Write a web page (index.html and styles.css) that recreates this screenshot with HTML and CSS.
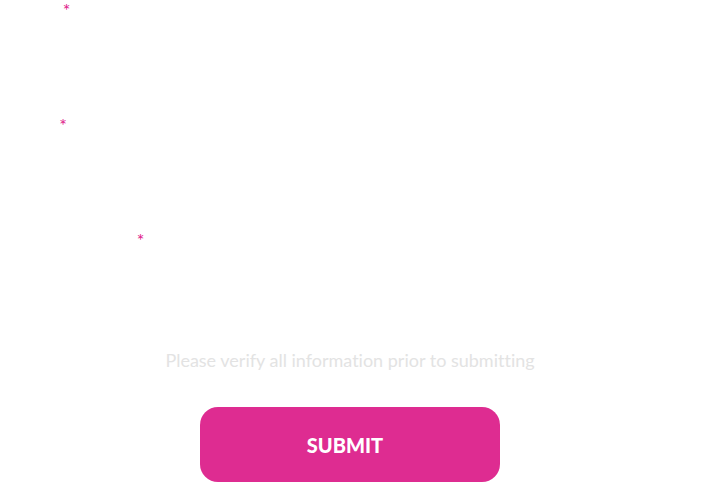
FILE: index.html
```html
<!DOCTYPE html>
<html lang="en">
<head>
<meta charset="utf-8">
<title>Form</title>
<link rel="stylesheet" href="styles.css">
</head>
<body>
<form class="form">
  <div class="group">
    <label class="label">Full Name<span class="req">*</span></label>
    <input class="field" type="text">
  </div>
  <div class="group">
    <label class="label">Company<span class="req">*</span></label>
    <input class="field" type="text">
  </div>
  <div class="group">
    <label class="label">Best Times to Contact<span class="req">*</span></label>
    <input class="field" type="text">
  </div>
  <p class="note">Please verify all information prior to submitting</p>
  <div class="actions">
    <button class="submit" type="button">SUBMIT</button>
  </div>
</form>
</body>
</html>
```
FILE: styles.css
```css
html, body {
  margin: 0;
  padding: 0;
  background: #ffffff;
  font-family: Lato, "Open Sans", sans-serif;
}
.form {
  width: 700px;
  display: flex;
  flex-direction: column;
  padding-top: 2px;
}
.group {
  display: flex;
  flex-direction: column;
  height: 115px;
}
.label {
  color: #ffffff;
  font-size: 14px;
  line-height: 20px;
}
.req {
  color: #e0218a;
  font-size: 18px;
  line-height: 14px;
  margin-left: 1px;
}
.field {
  margin-top: 6px;
  height: 40px;
  border: 1px solid #ffffff;
  background: #ffffff;
  outline: none;
}
.note {
  margin: 0;
  text-align: center;
  color: #e3e3e3;
  font-size: 18px;
  line-height: 22px;
  padding-top: 2px;
  font-variant-ligatures: none;
}
.actions {
  display: flex;
  justify-content: center;
  padding-top: 36px;
}
.submit {
  width: 300px;
  height: 75px;
  border: none;
  border-radius: 18px;
  background: #de2c91;
  color: #ffffff;
  font-family: Lato, sans-serif;
  font-weight: 900;
  font-size: 20px;
  padding: 0 10px 0 0;
}
```
